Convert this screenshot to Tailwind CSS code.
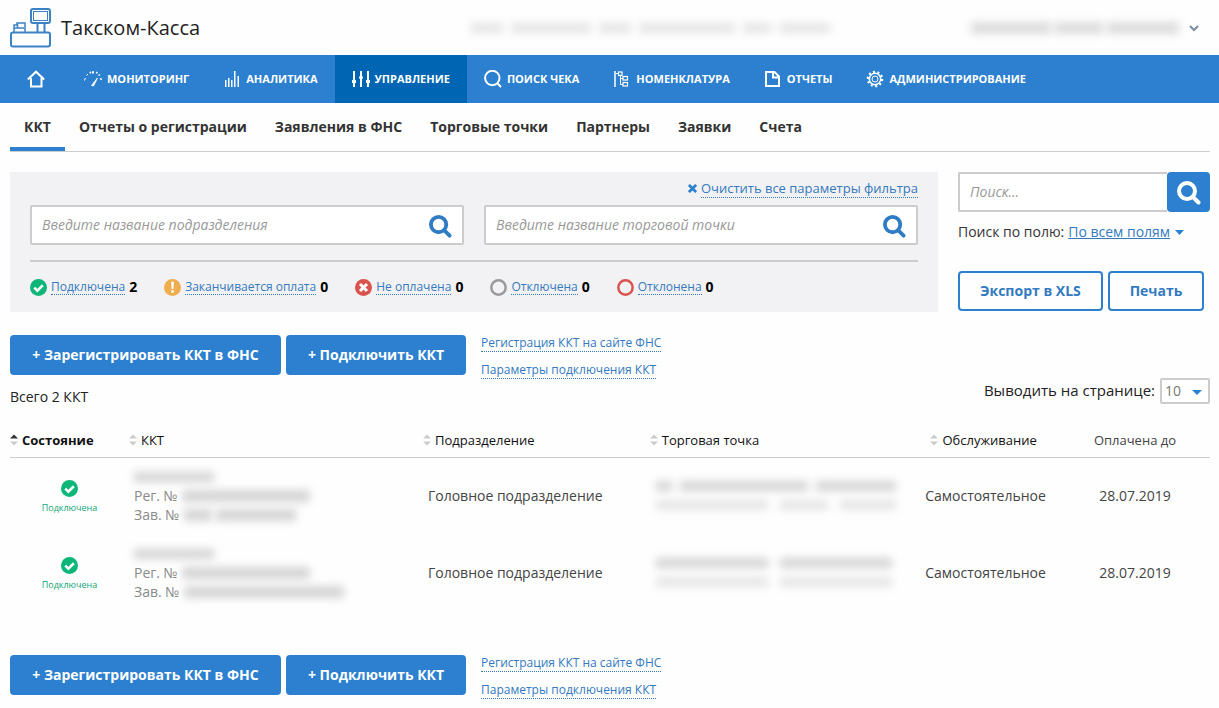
<!DOCTYPE html>
<html lang="ru">
<head>
<meta charset="utf-8">
<title>Такском-Касса</title>
<script src="https://cdn.jsdelivr.net/npm/@tailwindcss/browser@4"></script>
</head>
<body class="bg-[#fefefe] font-['Open_Sans','Noto_Sans',sans-serif] text-sm text-[#333]">
<svg class="hidden" aria-hidden="true">
  <symbol id="ok" viewBox="0 0 18 18"><circle cx="9" cy="9" r="9" fill="#0cb678"/><path d="M4.5 9.2l3.3 3.2 5.8-5.8" fill="none" stroke="#fff" stroke-width="2.7"/></symbol>
  <symbol id="warn" viewBox="0 0 18 18"><circle cx="9" cy="9" r="9" fill="#f0ad4e"/><path d="M7.5 3h3l-.5 7.5H8zM7.7 12h2.6v2.6H7.7z" fill="#fff"/></symbol>
  <symbol id="bad" viewBox="0 0 18 18"><circle cx="9" cy="9" r="9" fill="#d9534f"/><path d="M5.3 5.3l7.4 7.4M12.7 5.3l-7.4 7.4" stroke="#fff" stroke-width="3.2"/></symbol>
  <symbol id="ring" viewBox="0 0 18 18"><circle cx="9" cy="9" r="7.6" fill="none" stroke="currentColor" stroke-width="2.6"/></symbol>
  <symbol id="lens" viewBox="0 0 24 24"><circle cx="10" cy="10" r="8" fill="none" stroke="currentColor" stroke-width="4"/><path d="M16 16l5.5 5.5" stroke="currentColor" stroke-width="4" stroke-linecap="round"/></symbol>
  <symbol id="sort" viewBox="0 0 8 12"><path d="M0 4.5L4 .5l4 4z" fill="#ccc"/><path d="M0 7.5l4 4 4-4z" fill="#ccc"/></symbol>
  <symbol id="sort-up" viewBox="0 0 8 12"><path d="M0 4.5L4 .5l4 4z" fill="#333"/><path d="M0 7.5l4 4 4-4z" fill="#ccc"/></symbol>
</svg>

<header class="flex h-[55px] items-center px-2.5">
  <svg class="h-10 w-[41px]" viewBox="0 0 41 40" fill="none" stroke="#3b82c4" stroke-width="2">
    <rect x="1" y="24.500" width="39" height="14" rx="2"/>
    <rect x="21" y="1" width="19" height="14" rx="2"/>
    <rect x="23.500" y="3.500" width="14" height="9" stroke-width="1"/>
    <path d="M27.500 15v9.500M34.500 15v9.500" />
    <path d="M4 24.500v-7.500h3v-2h8v9.500M7.500 15.500v4.500H14M4 20h4" stroke-width="1.500"/>
  </svg>
  <span class="ml-2.5 text-xl text-[#222]">Такском-Касса</span>
  <div class="ml-auto mr-[141px] flex w-[359px] gap-2 opacity-60 blur-[4px]" aria-hidden="true">
    <i class="h-2.5 w-8 bg-neutral-300"></i><i class="h-2.5 w-20 bg-neutral-300"></i><i class="h-2.5 w-8 bg-neutral-300"></i><i class="h-2.5 w-24 bg-neutral-300"></i><i class="h-2.5 w-7 bg-neutral-300"></i><i class="h-2.5 flex-1 bg-neutral-300"></i>
  </div>
  <button class="flex items-center gap-2.5 pr-2.5" aria-label="Меню пользователя">
    <span class="flex w-[208px] gap-1 opacity-80 blur-[4px]"><i class="h-3 w-20 bg-neutral-300"></i><i class="h-3 w-12 bg-neutral-300"></i><i class="h-3 flex-1 bg-neutral-300"></i></span>
    <svg class="h-2 w-2.5" viewBox="0 0 10 8" fill="none" stroke="#7d8ea3" stroke-width="2.2"><path d="M1 2l4 4 4-4"/></svg>
  </button>
</header>

<nav class="flex h-12 bg-[#2c80cf] px-2.5 text-[11px] font-bold uppercase text-white">
  <a href="#" class="flex items-center pl-[17px] pr-[22px]" aria-label="Главная"><svg class="size-[18px]" viewBox="0 0 18 18" fill="none" stroke="currentColor" stroke-width="2"><path d="M.8 9.500L9 1.700l8.200 7.800M4 8v8.500h10.500V8"/></svg></a>
  <a href="#" class="flex items-center gap-[5px] px-[17px]"><svg class="size-[18px]" viewBox="0 0 18 18" fill="none" stroke="currentColor"><path d="M.5 10.500l.8-2.500M2.500 5.500L4 4" stroke-width="1"/><path d="M5.800 3l1.200-.8M9 3.500V1.200" stroke-width="2"/><path d="M12.500 3.500l.7-1.700M14.500 5.500l1.500-1M16.600 8l.6 2" stroke-width="1.500"/><path d="M13.500 8L7.500 15.500l2 .5z" fill="currentColor" stroke-width=".8"/></svg>Мониторинг</a>
  <a href="#" class="flex items-center gap-[5px] px-[17px]"><svg class="size-[18px]" viewBox="0 0 18 18" fill="currentColor"><path d="M2 10h1.500v7H2zM5 8h1.500v9H5zM8 10h1.500v7H8zM11 1h1.500v16H11zM14.500 6H16v11h-1.500z"/></svg>Аналитика</a>
  <a href="#" class="flex items-center gap-[5px] bg-[#0065b3] px-[17px]" aria-current="page"><svg class="size-[18px]" viewBox="0 0 18 18" fill="currentColor"><path d="M1 1h2v16H1zM8 1h2v16H8zM15 1h2v16h-2zM0 10h4v3H0zM7 6.500h4v2H7zM14 10h4v3h-4z"/></svg>Управление</a>
  <a href="#" class="flex items-center gap-[5px] px-[17px]"><svg class="size-[18px]" viewBox="0 0 18 18" fill="none" stroke="currentColor" stroke-width="2"><circle cx="8.300" cy="8" r="7.200"/><path d="M13 13l4 4"/></svg>Поиск чека</a>
  <a href="#" class="flex items-center gap-[5px] px-[17px]"><svg class="size-[18px]" viewBox="0 0 18 18" fill="none" stroke="currentColor"><path d="M2 1v16" stroke-width="1.500"/><path d="M3 3.500h3M7.500 6v8.500H10M7.500 8.500H10"/><rect x="5.500" y="2" width="3.500" height="3.500" stroke-width="1.200"/><rect x="10" y="6.500" width="4.500" height="3.500" stroke-width="1.200"/><rect x="10" y="12.500" width="4.500" height="3.500" stroke-width="1.200"/></svg>Номенклатура</a>
  <a href="#" class="flex items-center gap-[5px] px-[17px]"><svg class="size-[18px]" viewBox="0 0 18 18" fill="none" stroke="currentColor" stroke-width="2"><path d="M2 2h8.500L15 6.500V16H2zM9 2v5.500h6"/></svg>Отчеты</a>
  <a href="#" class="flex items-center gap-[5px] px-[17px]"><svg class="size-[18px]" viewBox="0 0 18 18" fill="none" stroke="currentColor"><circle cx="9" cy="9" r="3" /><circle cx="9" cy="9" r="5.700" stroke-width="1.500"/><circle cx="9" cy="9" r="7.200" stroke-width="2.200" stroke-dasharray="2 2.524"/></svg>Администрирование</a>
</nav>

<main class="px-2.5 pr-[9px]">
  <nav class="flex h-[49px] border-b border-[#ccc] text-sm font-bold">
    <a href="#" class="flex items-center border-b-4 border-[#2c80cf] px-3.5 pt-1" aria-current="page">ККТ</a>
    <a href="#" class="flex items-center px-3.5">Отчеты о регистрации</a>
    <a href="#" class="flex items-center px-3.5">Заявления в ФНС</a>
    <a href="#" class="flex items-center px-3.5">Торговые точки</a>
    <a href="#" class="flex items-center px-3.5">Партнеры</a>
    <a href="#" class="flex items-center px-3.5">Заявки</a>
    <a href="#" class="flex items-center px-3.5">Счета</a>
  </nav>

  <div class="mt-5 flex gap-5">
    <section class="h-[140px] flex-1 bg-[#f2f1f3] px-5">
      <div class="flex h-[33px] items-center justify-end gap-1">
        <svg class="size-[9px]" viewBox="0 0 10 10" stroke="#2c80cf" stroke-width="3"><path d="M1 1l8 8M9 1L1 9"/></svg>
        <a href="#" class="border-b border-dotted border-[#337ac0] text-[13px] leading-[17px] text-[#337ac0]">Очистить все параметры фильтра</a>
      </div>
      <div class="flex gap-5">
        <label class="flex h-10 flex-1 items-center rounded-xs border-2 border-[#ccc] bg-white px-2.5">
          <input type="search" aria-label="Подразделение" placeholder="Введите название подразделения" class="min-w-0 flex-1 italic outline-none placeholder:text-[#999]">
          <svg class="mt-0.5 size-[23px] text-[#2f7cc4]"><use href="#lens"/></svg>
        </label>
        <label class="flex h-10 flex-1 items-center rounded-xs border-2 border-[#ccc] bg-white px-2.5">
          <input type="search" aria-label="Торговая точка" placeholder="Введите название торговой точки" class="min-w-0 flex-1 italic outline-none placeholder:text-[#999]">
          <svg class="mt-0.5 size-[23px] text-[#2f7cc4]"><use href="#lens"/></svg>
        </label>
      </div>
      <div class="mt-[15px] flex gap-[27px] border-t-2 border-[#ccc] pt-4 text-xs">
        <div class="flex items-center gap-1"><svg class="size-[17px]"><use href="#ok"/></svg><a href="#" class="border-b border-dotted border-[#337ac0] leading-[15px] text-[#337ac0]">Подключена</a><b class="text-sm leading-[18px] text-black">2</b></div>
        <div class="flex items-center gap-1"><svg class="size-[17px]"><use href="#warn"/></svg><a href="#" class="border-b border-dotted border-[#337ac0] leading-[15px] text-[#337ac0]">Заканчивается оплата</a><b class="text-sm leading-[18px] text-black">0</b></div>
        <div class="flex items-center gap-1"><svg class="size-[17px]"><use href="#bad"/></svg><a href="#" class="border-b border-dotted border-[#337ac0] leading-[15px] text-[#337ac0]">Не оплачена</a><b class="text-sm leading-[18px] text-black">0</b></div>
        <div class="flex items-center gap-1"><svg class="size-[17px] text-[#999]"><use href="#ring"/></svg><a href="#" class="border-b border-dotted border-[#337ac0] leading-[15px] text-[#337ac0]">Отключена</a><b class="text-sm leading-[18px] text-black">0</b></div>
        <div class="flex items-center gap-1"><svg class="size-[17px] text-[#d9534f]"><use href="#ring"/></svg><a href="#" class="border-b border-dotted border-[#337ac0] leading-[15px] text-[#337ac0]">Отклонена</a><b class="text-sm leading-[18px] text-black">0</b></div>
      </div>
    </section>
    <aside class="w-[252px]">
      <div class="flex h-10">
        <input type="search" aria-label="Поиск" placeholder="Поиск..." class="min-w-0 flex-1 rounded-l-xs border-2 border-r-0 border-[#ccc] bg-white px-2.5 italic outline-none placeholder:text-[#999]">
        <button class="flex w-[43px] items-center justify-center rounded bg-[#2c80cf] pt-0.5 text-white" aria-label="Найти"><svg class="size-6"><use href="#lens"/></svg></button>
      </div>
      <p class="mt-2.5 flex items-center gap-1 leading-5"><span>Поиск по полю:</span><button class="flex items-center gap-[5px] text-[#337ac0]"><span class="underline">По всем полям</span><svg class="h-[5px] w-[9px]" viewBox="0 0 8 5" preserveAspectRatio="none" fill="#2c80cf"><path d="M0 0h8L4 5z"/></svg></button></p>
      <div class="mt-[29px] flex gap-[5px] font-bold text-[#337ac0]">
        <button class="h-10 w-[145px] rounded border-2 border-[#2c80cf]">Экспорт в XLS</button>
        <button class="h-10 w-24 rounded border-2 border-[#2c80cf]">Печать</button>
      </div>
    </aside>
  </div>

  <div class="mt-[23px] flex h-[53px] items-start gap-[5px]">
    <button class="h-10 w-[271px] rounded bg-[#2c80cf] font-bold text-white">+ Зарегистрировать ККТ в ФНС</button>
    <button class="h-10 w-[180px] rounded bg-[#2c80cf] font-bold text-white">+ Подключить ККТ</button>
    <div class="ml-2.5 flex flex-col items-start gap-2.5 text-xs text-[#337ac0]">
      <a href="#" class="border-b border-dotted border-[#337ac0] leading-4">Регистрация ККТ на сайте ФНС</a>
      <a href="#" class="border-b border-dotted border-[#337ac0] leading-4">Параметры подключения ККТ</a>
    </div>
  </div>
  <div class="-mt-2.5 flex h-[26px] items-center justify-between">
    <span class="pt-3 text-[#222]">Всего 2 ККТ</span>
    <label class="flex items-center gap-[5px] text-[15px] text-[#222]">Выводить на странице:
      <span class="relative flex">
        <select class="h-[26px] w-[50px] appearance-none rounded-xs border-2 border-[#ccc] bg-white pl-[3px] text-sm leading-5 text-[#777]"><option>10</option></select>
        <svg class="pointer-events-none absolute right-2 top-3 h-[5px] w-[10px]" viewBox="0 0 8 5" preserveAspectRatio="none" fill="#2c80cf"><path d="M0 0h8L4 5z"/></svg>
      </span>
    </label>
  </div>

  <table class="mt-5 w-full table-fixed border-collapse">
    <colgroup><col class="w-[9.500%]"><col class="w-[24.500%]"><col class="w-[18.900%]"><col class="w-[22.200%]"><col class="w-[12.400%]"><col class="w-[12.500%]"></colgroup>
    <thead class="text-[13px] text-[#111]">
      <tr class="h-[33px] border-b border-[#ccc]">
        <th class="text-left font-bold"><button class="flex items-center gap-1"><svg class="h-3 w-2"><use href="#sort-up"/></svg>Состояние</button></th>
        <th class="pl-[5px] text-left font-normal"><button class="flex items-center gap-1"><svg class="h-3 w-2"><use href="#sort"/></svg>ККТ</button></th>
        <th class="pl-[5px] text-left font-normal"><button class="flex items-center gap-1"><svg class="h-3 w-2"><use href="#sort"/></svg>Подразделение</button></th>
        <th class="pl-[5px] text-left font-normal"><button class="flex items-center gap-1"><svg class="h-3 w-2"><use href="#sort"/></svg>Торговая точка</button></th>
        <th class="pr-1 font-normal"><button class="flex w-full items-center justify-center gap-1"><svg class="h-3 w-2"><use href="#sort"/></svg>Обслуживание</button></th>
        <th class="font-normal text-[#444]">Оплачена до</th>
      </tr>
    </thead>
    <tbody class="text-[#444]">
      <tr class="h-[77px]">
        <td class="pl-[5px] pt-0.5"><div class="flex flex-col items-center gap-[5px] text-[9px] leading-3 text-[#0ca678]"><svg class="size-[17px]"><use href="#ok"/></svg>Подключена</div></td>
        <td class="pl-2.5 leading-[19px] text-[#8a8a8a]">
          <div class="flex h-[19px] items-center"><i class="h-2.5 w-20 bg-neutral-300 blur-[4px]"></i></div>
          <div class="flex items-center gap-1">Рег. №<i class="h-3 w-32 rounded bg-neutral-300 blur-[4px]"></i></div>
          <div class="flex items-center gap-1">Зав. №<i class="h-3 w-7 bg-neutral-300 blur-[4px]"></i><i class="h-3 w-20 bg-neutral-300 blur-[4px]"></i></div>
        </td>
        <td class="pl-2.5">Головное подразделение</td>
        <td class="pl-[11px]">
          <div class="flex h-[19px] items-center gap-2 blur-[4px]"><i class="h-2.5 w-4 bg-neutral-300"></i><i class="h-2.5 w-32 bg-neutral-300"></i><i class="h-2.5 w-20 bg-neutral-300"></i></div>
          <div class="flex h-[19px] items-center gap-3 opacity-60 blur-[4px]"><i class="h-2.5 w-28 bg-neutral-300"></i><i class="h-2.5 w-12 bg-neutral-300"></i><i class="h-2.5 w-14 bg-neutral-300"></i></div>
        </td>
        <td class="text-center">Самостоятельное</td>
        <td class="text-center">28.07.2019</td>
      </tr>
      <tr class="h-[77px]">
        <td class="pl-[5px] pt-0.5"><div class="flex flex-col items-center gap-[5px] text-[9px] leading-3 text-[#0ca678]"><svg class="size-[17px]"><use href="#ok"/></svg>Подключена</div></td>
        <td class="pl-2.5 leading-[19px] text-[#8a8a8a]">
          <div class="flex h-[19px] items-center"><i class="h-2.5 w-20 bg-neutral-300 blur-[4px]"></i></div>
          <div class="flex items-center gap-1">Рег. №<i class="h-3 w-32 rounded bg-neutral-300 blur-[4px]"></i></div>
          <div class="flex items-center gap-1">Зав. №<i class="h-3 w-40 rounded bg-neutral-300 blur-[4px]"></i></div>
        </td>
        <td class="pl-2.5">Головное подразделение</td>
        <td class="pl-[11px]">
          <div class="flex h-[19px] items-center gap-3 blur-[4px]"><i class="h-2.5 w-28 bg-neutral-300"></i><i class="h-2.5 w-28 bg-neutral-300"></i></div>
          <div class="flex h-[19px] items-center gap-3 opacity-60 blur-[4px]"><i class="h-2.5 w-28 bg-neutral-300"></i><i class="h-2.5 w-28 bg-neutral-300"></i></div>
        </td>
        <td class="text-center">Самостоятельное</td>
        <td class="text-center">28.07.2019</td>
      </tr>
    </tbody>
  </table>

  <div class="mt-11 flex h-[53px] items-start gap-[5px]">
    <button class="h-10 w-[271px] rounded bg-[#2c80cf] font-bold text-white">+ Зарегистрировать ККТ в ФНС</button>
    <button class="h-10 w-[180px] rounded bg-[#2c80cf] font-bold text-white">+ Подключить ККТ</button>
    <div class="ml-2.5 flex flex-col items-start gap-2.5 text-xs text-[#337ac0]">
      <a href="#" class="border-b border-dotted border-[#337ac0] leading-4">Регистрация ККТ на сайте ФНС</a>
      <a href="#" class="border-b border-dotted border-[#337ac0] leading-4">Параметры подключения ККТ</a>
    </div>
  </div>
</main>
</body>
</html>
